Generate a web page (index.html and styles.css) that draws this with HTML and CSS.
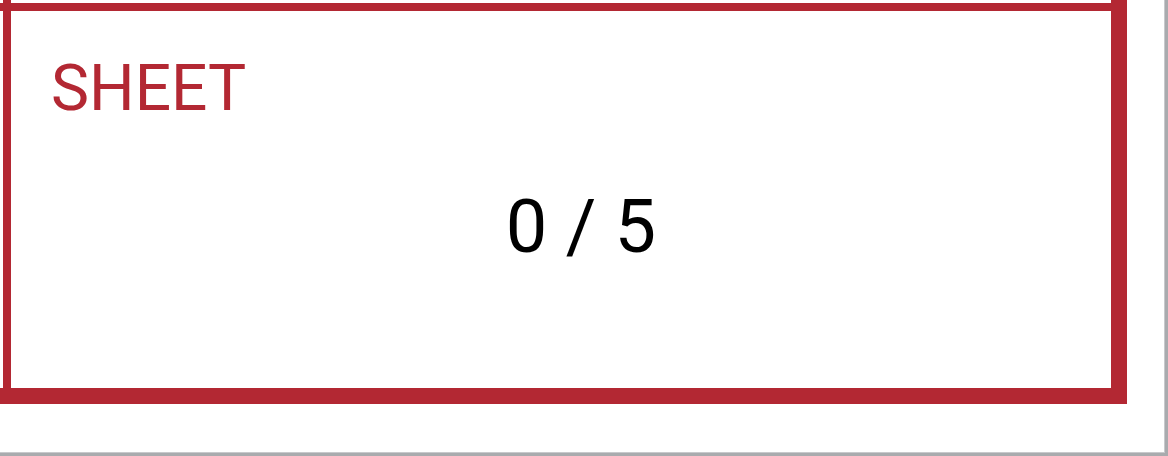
FILE: index.html
```html
<!DOCTYPE html>
<html>
<head>
<meta charset="utf-8">
<link rel="stylesheet" href="styles.css">
</head>
<body>
<div class="frame">
  <div class="outer">
    <div class="hline"></div>
    <div class="vline"></div>
    <div class="cell">
      <div class="title">SHEET</div>
      <div class="count">0 / 5</div>
    </div>
  </div>
</div>
</body>
</html>
```
FILE: styles.css
```css
html, body {
  margin: 0;
  padding: 0;
  background: #ffffff;
}
.frame {
  width: 1165px;
  height: 453px;
  border-right: 3px solid #a9abae;
  border-bottom: 3px solid #a9abae;
  box-shadow: inset -1px -1px 0 #c8c9cc;
  background: #ffffff;
}
.outer {
  width: 1111px;
  height: 388px;
  border-right: 16px solid #b32833;
  border-bottom: 16px solid #b32833;
  display: grid;
  grid-template-columns: 3px 8px 1fr;
  grid-template-rows: 3px 8px 1fr;
}
.hline {
  grid-column: 1 / 4;
  grid-row: 2;
  background: #b32833;
}
.vline {
  grid-column: 2;
  grid-row: 1 / 4;
  background: #b32833;
}
.cell {
  grid-column: 3;
  grid-row: 3;
  padding: 46px 0 0 40px;
  font-family: Roboto, "Noto Sans", sans-serif;
}
.title {
  color: #b32833;
  font-size: 64px;
  line-height: 1;
}
.count {
  margin-top: 69px;
  color: #000000;
  font-size: 74px;
  line-height: 1;
  text-align: center;
}
```
